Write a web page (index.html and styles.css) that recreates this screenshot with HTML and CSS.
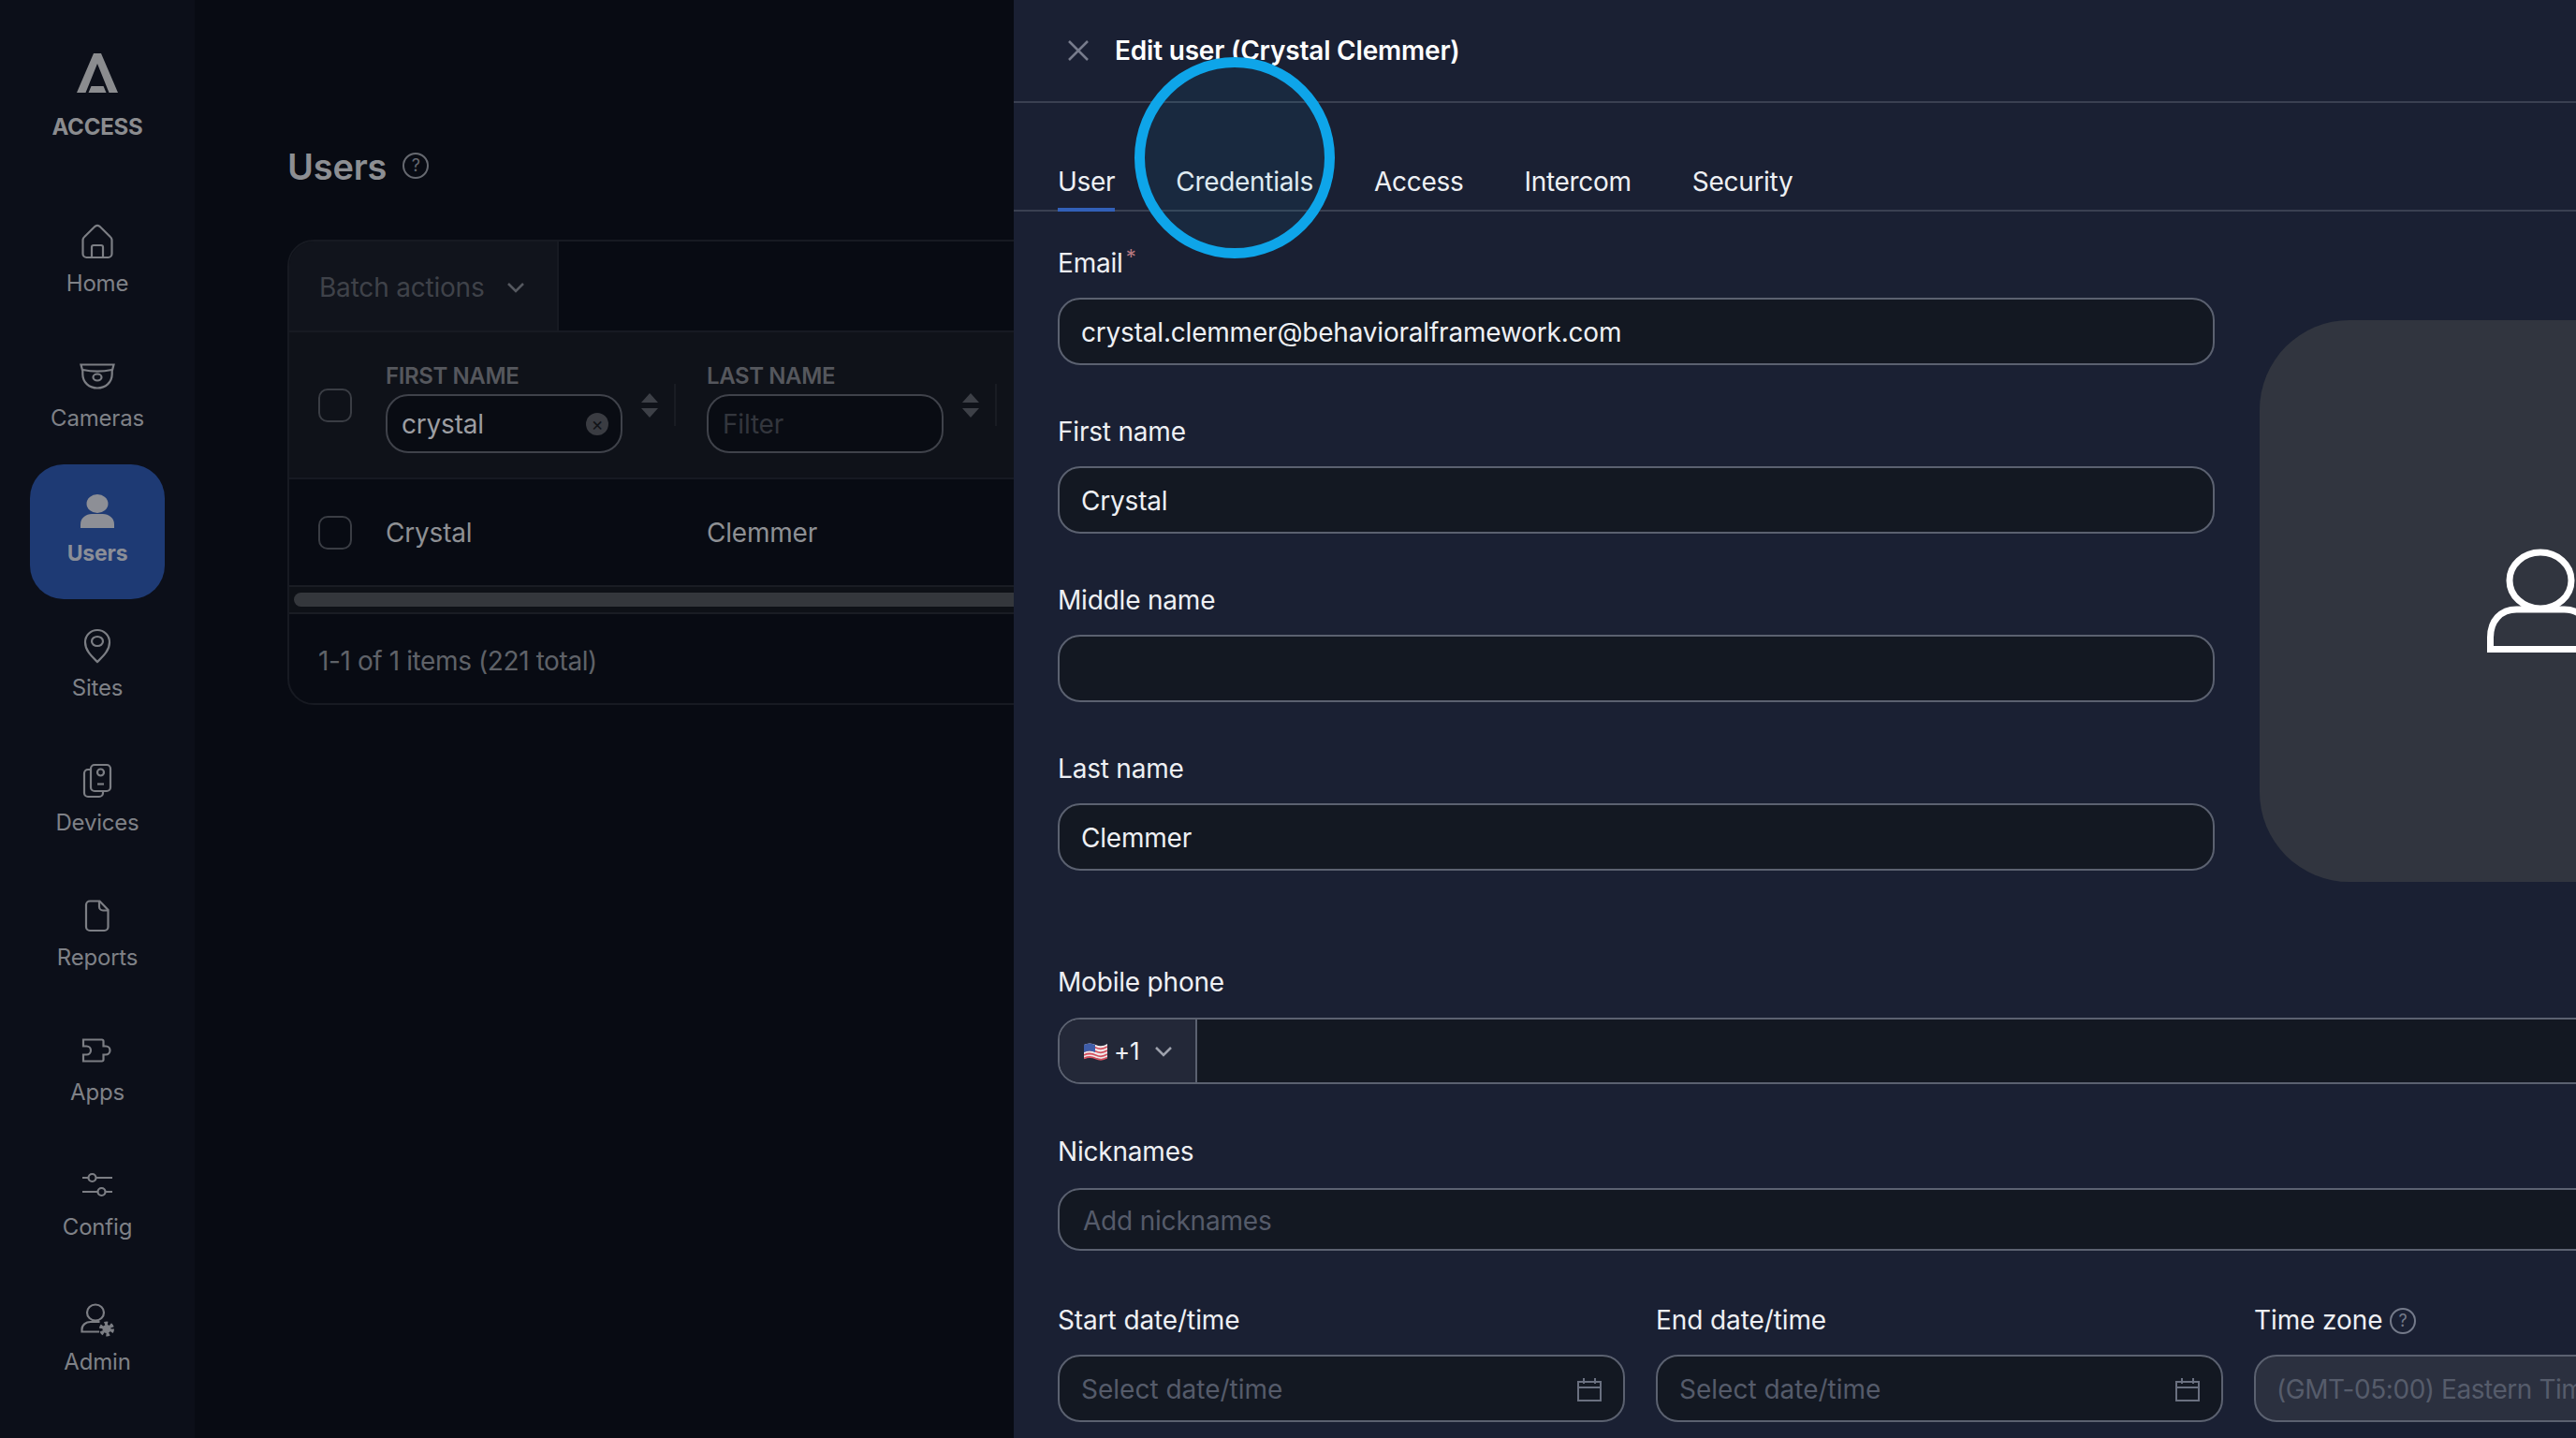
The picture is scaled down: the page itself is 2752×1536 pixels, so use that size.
FILE: index.html
```html
<!DOCTYPE html>
<html lang="en">

<head>
    <meta charset="UTF-8">
    <title>Edit user</title>
    <link rel="stylesheet" href="styles.css">
</head>

<body>
    <aside class="sidebar">
        <div class="logo">
            <svg width="44" height="42" viewBox="0 0 44 42"><path class="logo-mark" d="M18 0h8L44 42H34.500L22 11 9.500 42H0Z"/><path class="logo-mark" d="M15.500 35h13l3 7h-19Z"/></svg>
            <span>ACCESS</span>
        </div>
        <nav class="nav">
            <a class="nav-item">
                <svg class="nav-icon" viewBox="0 0 40 40"><path d="M4.5 18.5c0-1.5.6-2.6 1.7-3.5L17.5 3.8c1.5-1.2 3.5-1.2 5 0L33.800 15c1.100.9 1.700 2 1.700 3.500V33a4 4 0 0 1-4 4h-23a4 4 0 0 1-4-4Z"/><path d="M14 37V26a2 2 0 0 1 2-2h8a2 2 0 0 1 2 2v11"/></svg>
                <span>Home</span>
            </a>
            <a class="nav-item">
                <svg class="nav-icon" viewBox="0 0 40 40"><path d="M2.500 7.500h35l-1.800 7v3c0 9-7 15-15.700 15S4.300 26.500 4.300 17.500v-3Z"/><path d="M4.500 13c10 2 21 2 31 0"/><ellipse cx="20" cy="21" rx="4.500" ry="3.500"/></svg>
                <span>Cameras</span>
            </a>
            <a class="nav-item active">
                <svg class="nav-icon solid" viewBox="0 0 40 40"><ellipse cx="20" cy="12" rx="11.500" ry="10"/><path d="M2 38v-4c0-7 6-11 12-11h12c6 0 12 4 12 11v4Z"/></svg>
                <span>Users</span>
            </a>
            <a class="nav-item">
                <svg class="nav-icon" viewBox="0 0 40 40"><path d="M20 37C14 31 7 25 7 16a13 13 0 0 1 26 0c0 9-7 15-13 21Z"/><ellipse cx="20" cy="15" rx="6" ry="5"/></svg>
                <span>Sites</span>
            </a>
            <a class="nav-item">
                <svg class="nav-icon" viewBox="0 0 40 40"><rect x="13" y="3" width="21" height="28" rx="4"/><path d="M13 8h-3a4 4 0 0 0-4 4v21a4 4 0 0 0 4 4h12a4 4 0 0 0 4-4v-2"/><circle cx="23.500" cy="11" r="3.500"/><path d="M20 23.500h7"/></svg>
                <span>Devices</span>
            </a>
            <a class="nav-item">
                <svg class="nav-icon" viewBox="0 0 40 40"><path d="M12 4.500h10.500L31.500 14v18a4 4 0 0 1-4 4H12a4 4 0 0 1-4-4V8.500a4 4 0 0 1 4-4Z"/><path d="M22 4.500v6a4 4 0 0 0 4 4h5.500"/></svg>
                <span>Reports</span>
            </a>
            <a class="nav-item">
                <svg class="nav-icon" viewBox="0 0 40 40"><path d="M5 8.500h20A1.500 1.500 0 0 1 26.500 10v5.500H29a4.500 4.500 0 0 1 0 9h-2.500V30a1.500 1.500 0 0 1-1.500 1.500H5v-7h3.500a4.500 4.500 0 0 0 0-9H5Z"/></svg>
                <span>Apps</span>
            </a>
            <a class="nav-item">
                <svg class="nav-icon" viewBox="0 0 40 40"><path d="M4 12h6.500M18.500 12H36M4 27h16.500M28.500 27H36"/><circle cx="14.500" cy="12" r="4"/><circle cx="24.500" cy="27" r="4"/></svg>
                <span>Config</span>
            </a>
            <a class="nav-item">
                <svg class="nav-icon" viewBox="0 0 40 40"><ellipse cx="18" cy="12" rx="9" ry="8.500"/><path d="M22 32.500H3.500V30c0-5 4.500-8 9-8h10"/><circle class="gear-teeth" cx="30" cy="29.500" r="6"/><circle class="gear-hub" cx="30" cy="29.500" r="4.500"/></svg>
                <span>Admin</span>
            </a>
        </nav>
    </aside>

    <main class="users-page">
        <h1 class="page-title">Users <span class="help help-dim">?</span></h1>
        <div class="table-card">
            <div class="table-toolbar">
                <div class="batch">
                    Batch actions
                    <svg class="chevron" width="20" height="12" viewBox="0 0 20 12"><path d="M2 2l8 8 8-8"/></svg>
                </div>
            </div>
            <div class="table-head">
                <span class="check"></span>
                <div class="col">
                    <div class="col-name">FIRST NAME</div>
                    <div class="filter">
                        <span class="filter-value">crystal</span>
                        <span class="filter-clear">×</span>
                    </div>
                </div>
                <div class="sort"><i class="up"></i><i class="down"></i></div>
                <div class="col-sep"></div>
                <div class="col">
                    <div class="col-name">LAST NAME</div>
                    <div class="filter"><span class="filter-empty">Filter</span></div>
                </div>
                <div class="sort"><i class="up"></i><i class="down"></i></div>
                <div class="col-sep"></div>
            </div>
            <div class="table-row">
                <span class="check"></span>
                <span class="cell">Crystal</span>
                <span class="cell">Clemmer</span>
            </div>
            <div class="scrollbar"><div class="scroll-thumb"></div></div>
            <div class="table-foot">1-1 of 1 items (221 total)</div>
        </div>
    </main>

    <section class="drawer">
        <header class="drawer-head">
            <svg class="close" width="24" height="24" viewBox="0 0 24 24"><path d="M2 2l20 20M22 2L2 22"/></svg>
            <h2>Edit user (Crystal Clemmer)</h2>
        </header>
        <div class="tabs">
            <span class="tab selected">User</span>
            <span class="tab">Credentials</span>
            <span class="tab">Access</span>
            <span class="tab">Intercom</span>
            <span class="tab">Security</span>
        </div>
        <form class="form">
            <div class="form-top">
                <div class="name-fields">
                    <div class="field">
                        <label>Email<sup class="req">*</sup></label>
                        <div class="input">crystal.clemmer@behavioralframework.com</div>
                    </div>
                    <div class="field">
                        <label>First name</label>
                        <div class="input">Crystal</div>
                    </div>
                    <div class="field">
                        <label>Middle name</label>
                        <div class="input"></div>
                    </div>
                    <div class="field">
                        <label>Last name</label>
                        <div class="input">Clemmer</div>
                    </div>
                </div>
                <div class="avatar">
                    <svg width="114" height="118" viewBox="0 0 114 118"><ellipse cx="57" cy="37" rx="33" ry="30"/><path d="M3.500 110.500V98c0-18 11-30 28-30h51c17 0 28 12 28 30v12.500Z"/></svg>
                </div>
            </div>
            <div class="field phone-field">
                <label>Mobile phone</label>
                <div class="phone">
                    <div class="phone-code">
                        <svg class="flag" width="25" height="20" viewBox="0 0 25 20"><path d="M0 3q6-3 12.500 0T25 2v15q-6 2-12.500 0T0 18Z" fill="#f1e9ea"/><path d="M0 6q6-3 12.500 0T25 5M0 10q6-3 12.500 0T25 9M0 14q6-3 12.500 0T25 13M0 17.500q6-3 12.500 0T25 16.500" fill="none" stroke="#d5505f" stroke-width="1.800"/><path d="M0 3q6-3 12 0v8q-6-3-12 0Z" fill="#3f5da8"/></svg>
                        <span>+1</span>
                        <svg class="chevron light" width="20" height="12" viewBox="0 0 20 12"><path d="M2 2l8 8 8-8"/></svg>
                    </div>
                </div>
            </div>
            <div class="field nick-field">
                <label>Nicknames</label>
                <div class="input nick"><span class="placeholder">Add nicknames</span></div>
            </div>
            <div class="date-row">
                <div class="field">
                    <label>Start date/time</label>
                    <div class="input date">
                        <span class="placeholder">Select date/time</span>
                        <svg class="calendar" width="28" height="26" viewBox="0 0 28 26"><path d="M2 5h24v20H2ZM2 11h24M8 1v6M20 1v6"/></svg>
                    </div>
                </div>
                <div class="field">
                    <label>End date/time</label>
                    <div class="input date">
                        <span class="placeholder">Select date/time</span>
                        <svg class="calendar" width="28" height="26" viewBox="0 0 28 26"><path d="M2 5h24v20H2ZM2 11h24M8 1v6M20 1v6"/></svg>
                    </div>
                </div>
                <div class="field">
                    <label>Time zone <span class="help">?</span></label>
                    <div class="input disabled">(GMT-05:00) Eastern Time (US &amp; Canada)</div>
                </div>
            </div>
        </form>
        <div class="ring"></div>
    </section>
</body>

</html>
```

FILE: styles.css
```css
* {
    box-sizing: border-box;
}

html,
body {
    margin: 0;
    height: 100%;
    overflow: hidden;
}

body {
    display: flex;
    width: 2752px;
    height: 1536px;
    font-family: Inter, "Noto Sans", sans-serif;
    font-size: 28px;
    letter-spacing: -0.2px;
    background: #080b13;
}

/* Sidebar */
.sidebar {
    width: 208px;
    flex: none;
    background: #0c0f19;
}

.logo {
    height: 208px;
    padding-top: 57px;
    display: flex;
    flex-direction: column;
    align-items: center;
    gap: 22px;
    color: #8b8c8f;
    font-size: 24px;
    font-weight: 700;
    line-height: 30px;
}

.logo-mark {
    fill: #8b8c8f;
}

.nav {
    display: flex;
    flex-direction: column;
    align-items: center;
}

.nav-item {
    width: 144px;
    height: 144px;
    padding-top: 30px;
    display: flex;
    flex-direction: column;
    align-items: center;
    gap: 9px;
    color: #7f8187;
    font-size: 24px;
    line-height: 32px;
}

.nav-item.active {
    background: #1e3a74;
    border-radius: 36px;
    color: #8b8e97;
    font-size: 23px;
    font-weight: 700;
}

.nav-icon {
    width: 40px;
    height: 40px;
    fill: none;
    stroke: #7c7e84;
    stroke-width: 2.2;
}

.nav-icon.solid {
    fill: #8d8f96;
    stroke: none;
}

.gear-teeth {
    fill: none;
    stroke-width: 4;
    stroke-dasharray: 3.500 2.800;
}

.gear-hub {
    fill: #7c7e84;
    stroke: none;
}

/* Users page behind the drawer */
.users-page {
    width: 875px;
    flex: none;
    padding: 0 0 0 99px;
    overflow: hidden;
}

.page-title {
    margin: 0;
    padding-top: 151px;
    height: 256px;
    display: flex;
    align-items: flex-start;
    gap: 17px;
    color: #8d8f93;
    font-size: 38px;
    font-weight: 600;
    line-height: 54px;
}

.help {
    display: inline-flex;
    align-items: center;
    justify-content: center;
    width: 28px;
    height: 28px;
    border: 2px solid #747a8a;
    border-radius: 50%;
    color: #747a8a;
    font-size: 18px;
    font-weight: 400;
    line-height: 1;
    vertical-align: 3px;
}

.help-dim {
    margin-top: 12px;
    border-color: #666970;
    color: #666970;
}

.table-card {
    width: 1000px;
    height: 497px;
    border: 2px solid #171a22;
    border-radius: 28px;
    overflow: hidden;
}

.table-toolbar {
    height: 97px;
    border-bottom: 2px solid #171a22;
}

.batch {
    width: 288px;
    height: 95px;
    padding: 3px 0 0 32px;
    display: flex;
    align-items: center;
    gap: 23px;
    background: #11141c;
    border-right: 2px solid #171a22;
    color: #3f4249;
}

.chevron {
    fill: none;
    stroke: #55585f;
    stroke-width: 2.500;
}

.chevron.light {
    stroke: #9da1ac;
}

.table-head {
    height: 157px;
    padding-left: 31px;
    display: flex;
    align-items: center;
    background: #0f1219;
    border-bottom: 2px solid #171a22;
}

.check {
    width: 36px;
    height: 36px;
    flex: none;
    border: 2px solid #3a3d44;
    border-radius: 10px;
}

.col {
    width: 253px;
    margin-left: 36px;
    margin-top: 6px;
}

.col + .sort + .col-sep + .col {
    margin-left: 33px;
}

.col-name {
    color: #55575d;
    font-size: 24px;
    font-weight: 600;
    letter-spacing: -0.4px;
    line-height: 27px;
}

.filter {
    height: 63px;
    margin-top: 6px;
    padding: 2px 13px 0 15px;
    display: flex;
    align-items: center;
    justify-content: space-between;
    border: 2px solid #3f424a;
    border-radius: 24px;
    background: #090c13;
}

.filter-value {
    color: #9c9ea2;
}

.filter-empty {
    color: #33363d;
}

.filter-clear {
    width: 24px;
    height: 24px;
    display: flex;
    align-items: center;
    justify-content: center;
    border-radius: 50%;
    background: #3a3c42;
    color: #111318;
    font-size: 20px;
    line-height: 1;
}

.sort {
    margin-left: 20px;
    display: flex;
    flex-direction: column;
    gap: 6px;
}

.sort i {
    width: 0;
    height: 0;
    border-left: 9px solid transparent;
    border-right: 9px solid transparent;
}

.sort .up {
    border-bottom: 10px solid #3d4047;
}

.sort .down {
    border-top: 10px solid #3d4047;
}

.col-sep {
    width: 2px;
    height: 45px;
    margin-left: 17px;
    background: #191c23;
}

.table-row {
    height: 113px;
    padding-left: 31px;
    display: flex;
    align-items: center;
}

.cell {
    margin-left: 36px;
    width: 343px;
    color: #8e9094;
}

.cell + .cell {
    margin-left: 0;
}

.scrollbar {
    height: 31px;
    padding: 6px 0 6px 5px;
    background: #0e1117;
    border-top: 2px solid #1a1d24;
    border-bottom: 2px solid #1a1d24;
}

.scroll-thumb {
    height: 15px;
    border-radius: 8px;
    background: #34373c;
}

.table-foot {
    padding: 33px 0 0 31px;
    color: #5f6268;
    letter-spacing: -0.4px;
    line-height: 34px;
}

/* Edit drawer */
.drawer {
    position: relative;
    flex: 1;
    min-width: 0;
    background: #1a2033;
    color: #eef0f4;
    overflow: hidden;
}

.drawer-head {
    height: 110px;
    padding-left: 57px;
    display: flex;
    align-items: center;
    gap: 27px;
    border-bottom: 2px solid #3a4051;
}

.drawer-head h2 {
    margin: 0;
    color: #fff;
    font-size: 28px;
    font-weight: 600;
}

.close {
    fill: none;
    stroke: #777c8c;
    stroke-width: 2.500;
}

.tabs {
    height: 116px;
    padding: 64px 0 0 47px;
    display: flex;
    gap: 65px;
    border-bottom: 2px solid #3a4051;
    letter-spacing: -0.3px;
}

.tab {
    height: 52px;
    line-height: 40px;
}

.tab.selected {
    border-bottom: 4px solid #3260b8;
}

.form {
    width: 1931px;
    padding: 37px 0 0 47px;
}

.form-top {
    display: flex;
    gap: 48px;
}

.name-fields {
    width: 1236px;
    flex: none;
    display: flex;
    flex-direction: column;
    gap: 53px;
}

.field label {
    display: block;
    height: 36px;
    margin-bottom: 19px;
    line-height: 37px;
    color: #eef0f4;
}

.req {
    margin-left: 3px;
    color: #b5777f;
    font-size: 22px;
    line-height: 0;
    vertical-align: 9px;
}

.input {
    height: 72px;
    padding: 2px 23px 0;
    display: flex;
    align-items: center;
    background: #131822;
    border: 2px solid #5b6170;
    border-radius: 24px;
    color: #eef0f4;
}

.avatar {
    width: 600px;
    height: 600px;
    flex: none;
    margin-top: 79px;
    display: flex;
    align-items: center;
    justify-content: center;
    background: #31353f;
    border-radius: 96px;
}

.avatar svg {
    fill: none;
    stroke: #fff;
    stroke-width: 7;
}

.phone-field {
    margin-top: 89px;
}

.phone-field label,
.nick-field label {
    margin-bottom: 20px;
}

.phone {
    height: 71px;
    display: flex;
    background: #131822;
    border: 2px solid #5b6170;
    border-radius: 24px;
    overflow: hidden;
}

.phone-code {
    width: 147px;
    padding-left: 26px;
    display: flex;
    align-items: center;
    gap: 7px;
    background: #232838;
    border-right: 2px solid #5b6170;
    font-size: 26px;
}

.phone-code .chevron {
    margin-left: 9px;
}

.nick-field {
    margin-top: 55px;
}

.nick-field label,
.date-row label {
    line-height: 34px;
}

.input.nick {
    height: 67px;
    padding-left: 25px;
}

.placeholder {
    color: #555b6a;
}

.date-row {
    margin-top: 57px;
    display: grid;
    grid-template-columns: repeat(3, 606px);
    gap: 33px;
}

.date-row label {
    margin-bottom: 18px;
    letter-spacing: -0.1px;
}

.input.date {
    padding-right: 22px;
    justify-content: space-between;
    letter-spacing: 0;
}

.calendar {
    fill: none;
    stroke: #6a7080;
    stroke-width: 2;
}

.input.disabled {
    padding-left: 22px;
    background: #2b303f;
    color: #565c6b;
    letter-spacing: -0.45px;
    white-space: nowrap;
}

/* Highlight circle from the screen recording */
.ring {
    position: absolute;
    left: 129px;
    top: 61px;
    width: 214px;
    height: 215px;
    border: 11px solid #0ea5e9;
    border-radius: 50%;
    background: rgba(14, 165, 233, 0.07);
}
```
